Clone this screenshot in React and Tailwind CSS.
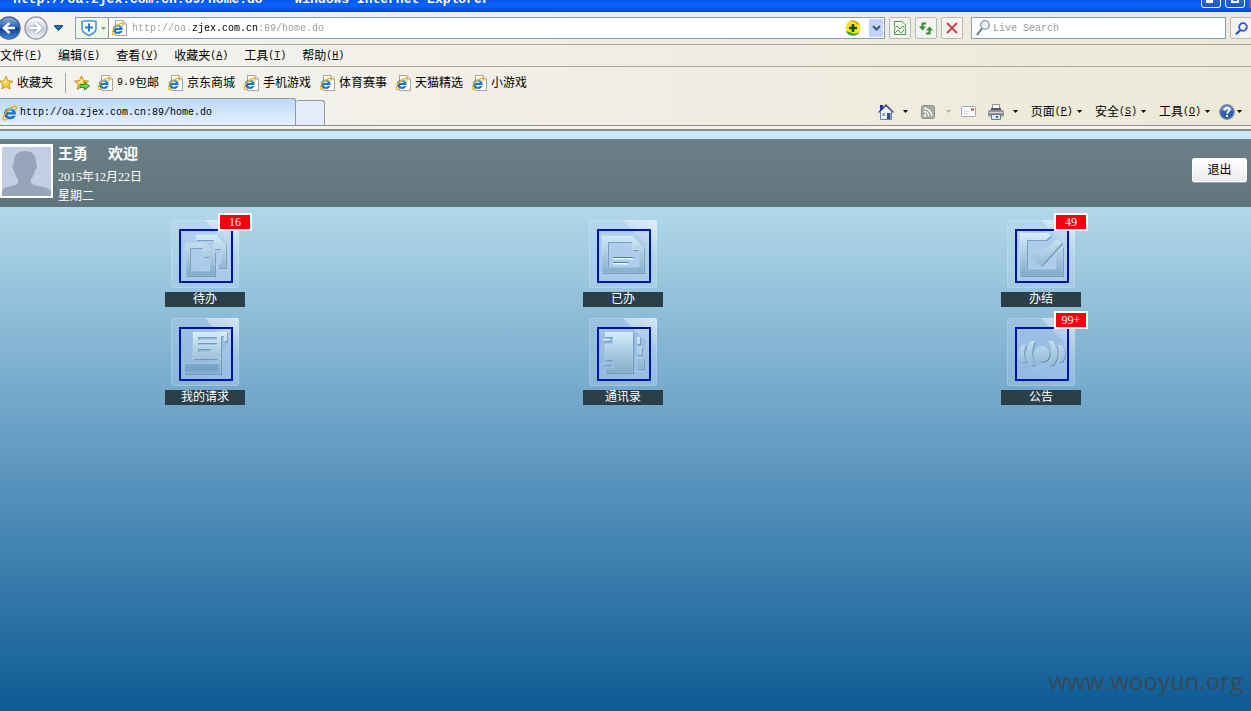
import React from "react";

const MONO = "font-['Liberation_Mono','Noto_Sans_CJK_SC',monospace] text-[10px]";

function Caret({ className = "text-black" }) {
  return (
    <svg className={`shrink-0 ${className}`} width="5" height="3" viewBox="0 0 5 3" aria-hidden="true">
      <path d="M0 0h5L2.5 3z" fill="currentColor" />
    </svg>
  );
}

function IeGlyph() {
  return (
    <g>
      <path
        d="M14 9.600H5.600c.2 1.500 1.200 2.200 2.500 2.200 1 0 1.700-.4 2.200-1.100h3.300c-.8 2.300-2.800 3.600-5.400 3.600C4.600 14.300 2 12 2 8.700S4.600 3 8 3c3.500 0 6 2.300 6 6.600zM5.700 7.200h4.800C10.200 6 9.300 5.500 8 5.500S6 6 5.700 7.200z"
        fill="#1a74c8"
      />
      <path d="M3 7C4 4.500 6 3.500 8 3.500c2 0 3.800.8 4.800 2.500C10 4.500 6 4.800 3 7z" fill="#62b5ee" />
      <path
        d="M13.300 5.200C15 2.600 14.900.900 13 1 9.800 1.300 3.800 6.200 1.800 10.700c-1.200 2.900-.700 4.600 1.200 4.200.900-.2 1.700-.6 2.600-1.300"
        fill="none"
        stroke="#efb21a"
        strokeWidth="1.500"
      />
    </g>
  );
}

function IeIcon() {
  return (
    <svg className="shrink-0" width="16" height="16" viewBox="0 0 16 16" aria-hidden="true">
      <IeGlyph />
    </svg>
  );
}

function IePage() {
  return (
    <svg className="shrink-0" width="15" height="16" viewBox="0 0 15 16" aria-hidden="true">
      <path d="M3.500.5h7.500l3.500 3.500v11.500h-11z" fill="#fff" stroke="#a9a48f" />
      <path d="M11 .5V4h3.500" fill="#e8e6da" stroke="#a9a48f" />
      <g transform="translate(-.8 2.200) scale(.82)">
        <IeGlyph />
      </g>
    </svg>
  );
}

function Star({ arrow }) {
  return (
    <svg className="shrink-0" width={arrow ? 16 : 15} height="16" viewBox="0 0 16 16" aria-hidden="true">
      <path
        d="M7.500 1l2 4.700 5 .4-3.800 3.300 1.200 5-4.400-2.700L3.100 14.400l1.200-5L.500 6.100l5-.4z"
        fill="#fbcf3e"
        stroke="#c98a10"
        strokeLinejoin="round"
      />
      <path d="M7.500 3l1 3.500-4 3 .8-3.200L3 6.600l3-.3z" fill="#fff0a8" />
      {arrow && <path d="M6 9.500h4.500V7L15.500 11l-5 4v-2.500H6z" fill="#6fd04c" stroke="#2b8c22" />}
    </svg>
  );
}

function ArrowCircle({ primary }) {
  return (
    <svg width="24" height="24" viewBox="0 0 24 24" aria-hidden="true">
      <defs>
        <linearGradient id={primary ? "backFill" : "fwdFill"} x1="0" y1="0" x2="0" y2="1">
          <stop offset="0" stopColor={primary ? "#8db2e2" : "#ffffff"} />
          <stop offset=".45" stopColor={primary ? "#2d62b4" : "#d8dde6"} />
          <stop offset=".55" stopColor={primary ? "#123f90" : "#c8cfdb"} />
          <stop offset="1" stopColor={primary ? "#3d8ee0" : "#f4f6fa"} />
        </linearGradient>
      </defs>
      <circle cx="12" cy="12" r="11" fill={primary ? "url(#backFill)" : "url(#fwdFill)"} stroke={primary ? "#4b6795" : "#98a1b2"} strokeWidth="1.500" />
      <path
        d={primary ? "M18 12H8m4.500-5L7 12l5.500 5" : "M6 12h10m-4.500-5l5.500 5-5.500 5"}
        fill="none"
        stroke={primary ? "#fff" : "#9aa3b3"}
        strokeWidth={primary ? "2.600" : "4.200"}
      />
      {!primary && <path d="M6 12h10m-4.500-5l5.500 5-5.500 5" fill="none" stroke="#fff" strokeWidth="2.400" />}
    </svg>
  );
}

function TitleBar() {
  const box =
    "flex h-5 w-5 shrink-0 items-end justify-center rounded-[3px] border border-white bg-gradient-to-b from-[#3b7ff0] to-[#1f52cf] pb-1";
  return (
    <header className="flex h-3 shrink-0 items-end justify-between overflow-hidden bg-gradient-to-b from-[#0a58e8] via-[#0464fb] to-[#0348c4]">
      <h1 className="flex gap-3 whitespace-nowrap pb-1 pl-[13px] font-['Liberation_Mono',monospace] text-[13px] leading-4 font-bold text-white">
        <span>http://oa.zjex.com.cn:89/home.do</span>
        <span>-</span>
        <span>Windows Internet Explorer</span>
      </h1>
      <div className="flex h-6 gap-1 pb-1">
        <button type="button" aria-label="最小化" className={box}>
          <span className="mr-1 h-[3px] w-[7px] bg-white" />
        </button>
        <button type="button" aria-label="最大化" className={box}>
          <span className="h-2 w-2 border-2 border-white" />
        </button>
        <div className="h-5 w-[2px] bg-[#d8452a]" />
      </div>
    </header>
  );
}

const TOOL = "flex h-[22px] w-[22px] shrink-0 items-center justify-center rounded-[2px] border border-[#b5b8c0] bg-[#f3f3ef]";

function AddressBar() {
  return (
    <div className="-mr-px flex h-8 shrink-0 items-center">
      <button type="button" aria-label="后退" className="-ml-[3px] shrink-0">
        <ArrowCircle primary />
      </button>
      <button type="button" aria-label="前进" className="ml-[3px] shrink-0">
        <ArrowCircle />
      </button>
      <button type="button" aria-label="历史记录" className="mx-[6px] shrink-0">
        <svg width="9" height="6" viewBox="0 0 9 6" aria-hidden="true">
          <path d="M.5.500h8v1L4.500 5.500.500 1.500z" fill="#1d6fa8" stroke="#154f86" />
        </svg>
      </button>
      <div className="ml-[6px] flex h-[22px] min-w-0 flex-1 items-center border border-[#7f9db9] bg-white">
        <div className="flex h-full w-[33px] shrink-0 items-center gap-[3px] border-r border-[#8b93a0] bg-[#eff8e2] pl-1">
          <svg width="18" height="18" viewBox="0 0 18 18" aria-hidden="true">
            <path d="M2 2.500q7-1.500 14 0v7q0 4-7 7-7-3-7-7z" fill="#fff" stroke="#4a93d6" strokeWidth="1.600" />
            <path d="M9 4.500v8M5 8.500h8" stroke="#2b77c8" strokeWidth="2" />
          </svg>
          <Caret className="text-[#8a9a80]" />
        </div>
        <span className="ml-[3px] mr-[5px]">
          <IePage />
        </span>
        <input
          aria-label="地址"
          defaultValue="http://oa.zjex.com.cn:89/home.do"
          className="min-w-0 flex-1 bg-[linear-gradient(90deg,#999_60px,#000_60px,#000_126px,#999_126px)] bg-clip-text pt-px font-['Liberation_Mono',monospace] text-[10px] text-transparent outline-none"
        />
        <svg className="mr-2 shrink-0" width="16" height="16" viewBox="0 0 16 16" aria-hidden="true">
          <circle cx="8" cy="8" r="7.500" fill="#f7e51c" />
          <path d="M1 11A7.500 7.500 0 0 0 14.500 12Q9 15 6 12.500z" fill="#3ba53a" />
          <path d="M15 5A7.500 7.500 0 0 0 4 1.500Q10 1 11.500 4z" fill="#d8a818" />
          <path d="M8 4v8M4 8h8" stroke="#1c4a14" strokeWidth="2.600" />
        </svg>
        <button type="button" aria-label="展开地址" className="mr-px flex h-[18px] w-[14px] shrink-0 items-center justify-center rounded-[1px] bg-[#c3d3fb]">
          <svg width="9" height="6" viewBox="0 0 9 6" aria-hidden="true">
            <path d="M1 1l3.500 3.500L8 1" fill="none" stroke="#3f587f" strokeWidth="2" />
          </svg>
        </button>
      </div>
      <div className="mx-1 flex shrink-0 gap-1">
        <button type="button" aria-label="兼容性视图" className={TOOL}>
          <svg width="12" height="14" viewBox="0 0 12 14" aria-hidden="true">
            <path d="M.5 6V.5h7.500l3.500 3.500v2M.5 8v5.500h11V8" fill="#f4fbf2" stroke="#4f9a55" />
            <path d="M0 8l3-3 3 3 3-3 3 3M1 12l3-3 3 3 3-3" fill="none" stroke="#4f9a55" />
          </svg>
        </button>
        <button type="button" aria-label="刷新" className={TOOL}>
          <svg width="14" height="13" viewBox="0 0 14 13" aria-hidden="true">
            <path d="M7 1.500H3.500V5M7 11.500h3.500V8" fill="none" stroke="#35893a" strokeWidth="2" />
            <path d="M0 4.500h7L3.500 8.500zM7 8.500h7l-3.500-4z" fill="#35893a" />
          </svg>
        </button>
        <button type="button" aria-label="停止" className={TOOL}>
          <svg width="12" height="12" viewBox="0 0 12 12" aria-hidden="true">
            <path d="M1 1l10 10M11 1L1 11" stroke="#c8414b" strokeWidth="2" />
          </svg>
        </button>
      </div>
      <div className="ml-1 flex h-[22px] w-[255px] shrink-0 items-center gap-[3px] border border-[#7f9db9] bg-white pl-1">
        <svg width="14" height="16" viewBox="0 0 14 16" aria-hidden="true">
          <circle cx="9" cy="5" r="4.300" fill="#eaf3fb" stroke="#8795a5" strokeWidth="1.300" />
          <path d="M6 8.500L1 15" stroke="#6b7684" strokeWidth="2" />
        </svg>
        <input
          aria-label="搜索"
          placeholder="Live Search"
          className="min-w-0 flex-1 pt-px font-['Liberation_Mono',monospace] text-[10px] outline-none placeholder:text-[#999]"
        />
      </div>
      <button type="button" aria-label="开始搜索" className={`${TOOL} ml-1`}>
        <svg width="13" height="13" viewBox="0 0 13 13" aria-hidden="true">
          <circle cx="8" cy="5" r="3.800" fill="#fff" stroke="#2456c8" strokeWidth="1.800" />
          <path d="M5.500 8L1 12.300" stroke="#2456c8" strokeWidth="2.200" />
        </svg>
      </button>
    </div>
  );
}

function MenuLabel({ text, letter }) {
  return (
    <span className="flex items-center whitespace-nowrap">
      {text}
      <span className={MONO}>
        (<span className="underline">{letter}</span>)
      </span>
    </span>
  );
}

const MENUS = [
  ["文件", "F"],
  ["编辑", "E"],
  ["查看", "V"],
  ["收藏夹", "A"],
  ["工具", "T"],
  ["帮助", "H"],
];

function MenuBar() {
  return (
    <nav className="flex h-[23px] shrink-0 items-center gap-4 border-t border-b border-[#aca899] pt-px">
      {MENUS.map(([text, letter]) => (
        <button type="button" key={letter}>
          <MenuLabel text={text} letter={letter} />
        </button>
      ))}
    </nav>
  );
}

const FAVOURITES = ["京东商城", "手机游戏", "体育赛事", "天猫精选", "小游戏"];

function FavouritesBar() {
  return (
    <nav className="flex h-[31px] shrink-0 items-center whitespace-nowrap pt-px">
      <button type="button" className="-ml-[1px] flex items-center gap-[3px]">
        <Star />
        收藏夹
      </button>
      <span className="ml-3 mr-2 h-5 w-px bg-[#aca899]" />
      <button type="button" aria-label="添加到收藏夹栏" className="mr-2">
        <Star arrow />
      </button>
      <div className="flex gap-[9px]">
        <a href="#bao" className="flex items-center gap-1">
          <IePage />
          <span className="flex items-center">
            <span className={MONO}>9.9</span>包邮
          </span>
        </a>
        {FAVOURITES.map((name) => (
          <a href="#fav" key={name} className="flex items-center gap-1">
            <IePage />
            {name}
          </a>
        ))}
      </div>
    </nav>
  );
}

function TabRow() {
  return (
    <div className="flex h-7 shrink-0 items-end justify-between border-b border-[#8e8f8f]">
      <div className="flex items-end">
        <button
          type="button"
          className="flex h-[27px] w-[296px] items-center gap-[2px] rounded-tr-[3px] border-t border-r border-[#919b9c] bg-gradient-to-b from-[#bcd8f8] to-[#e6f1fd] pt-px pl-[2px]"
        >
          <IeIcon />
          <span className={MONO}>http://oa.zjex.com.cn:89/home.do</span>
        </button>
        <button type="button" aria-label="新选项卡" className="h-[25px] w-[29px] rounded-t-[3px] border border-b-0 border-l-0 border-[#919b9c] bg-[#e3edfa]" />
      </div>
      <div className="flex h-full items-center pr-[9px]">
        <button type="button" aria-label="主页" className="flex items-center gap-[9px]">
          <svg width="16" height="16" viewBox="0 0 16 16" aria-hidden="true">
            <path d="M2.500 7.500v8h11v-8L8 2z" fill="#eef2fa" stroke="#6f80a8" />
            <path d="M.5 8.500L8 1l7.500 7.500" fill="none" stroke="#44598f" strokeWidth="1.500" />
            <path d="M2 1h3v3L2 7z" fill="#24378c" />
            <path d="M9 9h3.500v6H9z" fill="#2e4da5" />
            <path d="M4.500 9H7v3H4.500z" fill="#7ba0d8" />
          </svg>
          <Caret />
        </button>
        <button type="button" aria-label="源" className="ml-[13px] flex items-center gap-[11px]">
          <svg width="14" height="14" viewBox="0 0 14 14" aria-hidden="true">
            <rect x=".5" y=".5" width="13" height="13" rx="2" fill="#a9a9a6" stroke="#8e8e8a" />
            <circle cx="4" cy="10.500" r="1.300" fill="#fff" />
            <path d="M2.800 6.500a4.700 4.700 0 0 1 4.900 4.900M2.800 3.300a8 8 0 0 1 8 8" fill="none" stroke="#fff" strokeWidth="1.400" />
          </svg>
          <Caret className="text-[#b9b6a8]" />
        </button>
        <button type="button" aria-label="阅读邮件" className="ml-[10px]">
          <svg width="15" height="11" viewBox="0 0 15 11" aria-hidden="true">
            <rect x=".5" y=".5" width="14" height="10" rx="1" fill="#f9f9fb" stroke="#a3a5b5" />
            <path d="M3 5.500h5M3 7.500h4" stroke="#d5d6de" />
            <path d="M10 2.500h3v2h-3z" fill="#c8434c" />
          </svg>
        </button>
        <button type="button" aria-label="打印" className="ml-[12px] flex items-center gap-[9px]">
          <svg width="16" height="16" viewBox="0 0 16 16" aria-hidden="true">
            <path d="M4.500 5V.5h7V5" fill="#fff" stroke="#8f8f8f" />
            <path d="M3 4h10v3H3z" fill="#55575c" />
            <path d="M2 6h12q2 0 2 2v3.500q0 1-1 1H1q-1 0-1-1V8q0-2 2-2z" fill="#8f9196" />
            <path d="M1 8.500h14" stroke="#d4d5d8" />
            <path d="M3.500 10.500h9v5h-9z" fill="#dce8f5" stroke="#6f7782" />
            <path d="M8 12h2v2H8z" fill="#3a63b0" />
          </svg>
          <Caret />
        </button>
        {[
          ["页面", "P"],
          ["安全", "S"],
          ["工具", "O"],
        ].map(([text, letter]) => (
          <button type="button" key={letter} className="ml-[13px] flex items-center gap-1">
            <MenuLabel text={text} letter={letter} />
            <Caret />
          </button>
        ))}
        <button type="button" aria-label="帮助" className="ml-[9px] flex items-center gap-[2px]">
          <svg width="16" height="16" viewBox="0 0 16 16" aria-hidden="true">
            <circle cx="8" cy="8" r="7.300" fill="#2f5eae" stroke="#8b97ab" strokeWidth="1.300" />
            <path d="M2.500 6a5.800 5.800 0 0 1 11 0q-5.500 2.500-11 0z" fill="#7da3dd" />
            <path d="M5.500 6.200C5.700 3 10.500 3 10.500 6c0 1.800-2.400 1.800-2.400 3.800M8.100 11v2" fill="none" stroke="#fff" strokeWidth="1.800" />
          </svg>
          <Caret />
        </button>
      </div>
    </div>
  );
}

function UserBar() {
  return (
    <section className="flex h-[68px] shrink-0 items-center justify-between bg-gradient-to-b from-[#6d8087] to-[#60747d] pr-1 text-white">
      <div className="flex items-center gap-[5px]">
        <svg className="-mt-1 box-content border-[2px] border-t-[3px] border-white" width="49" height="49" viewBox="0 0 49 49" role="img" aria-label="头像">
          <path d="M0 0h49v49H0z" fill="#c3cee2" />
          <path
            d="M0 49v-5c1-4 7-4 13-6 3-1 4-3 3-6-3-3-3-6-4-9-2-1-2-5 0-6C11 8 16 4 23 4s12 4 11 13c2 1 1 5-1 6-1 3-1 6-4 9-1 3 0 5 3 6 6 2 15 2 17 6v5z"
            fill="#98a3bc"
          />
        </svg>
        <div>
          <p className="flex gap-5 text-[15px] leading-[26px] font-bold">
            <span>王勇</span>
            <span>欢迎</span>
          </p>
          <p className="font-['Liberation_Serif','Noto_Sans_CJK_SC',serif] leading-5">2015年12月22日</p>
          <p className="leading-[18px]">星期二</p>
        </div>
      </div>
      <button
        type="button"
        className="mt-[-6px] h-6 w-[55px] rounded-[2px] border border-white bg-gradient-to-b from-white to-[#ececec] text-black shadow-[0_1px_0_#9aa5aa]"
      >
        退出
      </button>
    </section>
  );
}

const ICONS = {
  pending: (
    <>
      <path d="M17 6h21l9 10v23h-8v-4h3V20h-7v-9H17z" />
      <path d="M7 14h20l9 9v24H7zM11 19v23h20V28h-7v-9z" fillRule="evenodd" />
      <path d="M25 19l6 7h-6z" />
    </>
  ),
  done: (
    <>
      <path d="M5 7h31l11 12v25H5zM11 13v25h31V21h-7v-8z" fillRule="evenodd" />
      <path d="M16 29h20v1H16zM16 34h15v1H16z" fill="#f0fbff" stroke="none" />
      <path d="M16 28h20v1H16zM16 33h15v1H16z" fill="#4f819f" stroke="none" />
    </>
  ),
  closed: (
    <>
      <path d="M5 4h29l2 3-5 4H12v29h29V24l7-7v30H5z" />
      <path d="M15 27l5-5 5 5 17-17 5 4-21 23z" />
    </>
  ),
  requests: (
    <>
      <path d="M14 5h34v9h-3V9h-3v23H14zM19 10v3h19v-3zm0 6v2h19v-2zm0 6v3h13v-3z" fillRule="evenodd" />
      <path d="M39 32h3v15H5V37h34z" />
      <path d="M6 37h33v7H6z" fill="#5f93bb" fillOpacity=".5" stroke="none" />
    </>
  ),
  contacts: (
    <>
      <path d="M8 5h28v41H8v-5h8v-8H8V17h8V10H8z" />
      <path d="M6 12h7v2H6zM6 36h7v2H6zM40 10h3v7h-3zM40 20h5v8h-5zM40 31h7v11h-7z" />
    </>
  ),
  notices: (
    <>
      <circle cx="27" cy="27" r="7.500" />
      <path d="M16 14h4q-6 12 0 24h-4q-9-12 0-24zM38 14h-4q6 12 0 24h4q9-12 0-24zM7 18h4q-4 8 0 17H7q-6-9 0-17zM47 18h-4q4 8 0 17h4q6-9 0-17z" />
    </>
  ),
};

const APPS = [
  { icon: "pending", label: "待办", badge: "16" },
  { icon: "done", label: "已办" },
  { icon: "closed", label: "办结", badge: "49" },
  { icon: "requests", label: "我的请求" },
  { icon: "contacts", label: "通讯录" },
  { icon: "notices", label: "公告", badge: "99+" },
];

function AppTile({ icon, label, badge }) {
  return (
    <a href={`#${icon}`} className="relative flex w-20 flex-col items-center gap-1">
      <span className="relative block h-[68px] w-[68px] pt-[9px] pl-2">
        <svg className="absolute inset-0" width="68" height="68" viewBox="0 0 68 68" aria-hidden="true">
          <defs>
            <linearGradient id={`shine-${icon}`} x1="1" y1="0" x2=".6" y2="1">
              <stop offset="0" stopColor="#fff" stopOpacity=".6" />
              <stop offset=".5" stopColor="#d5e2ff" stopOpacity=".22" />
              <stop offset="1" stopColor="#bcd0ff" stopOpacity=".1" />
            </linearGradient>
          </defs>
          <rect x=".5" y=".5" width="67" height="67" rx="2" fill="#d5e6ff" fillOpacity=".2" stroke="#e2f2ff" strokeOpacity=".3" />
          <path d="M34 0h32q2 0 2 2v64q0 2-2 2H30L10 52q30 0 48-28Q46 14 34 0z" fill={`url(#shine-${icon})`} />
        </svg>
        <span className="relative block h-[54px] w-[54px] border-2 border-[#0015a8] bg-[#a9bfff]/20">
          <svg className="block" width="50" height="50" viewBox="2 2 50 50" aria-hidden="true">
            <defs>
              <linearGradient id={`fill-${icon}`} x1="0" y1="4" x2="0" y2="48" gradientUnits="userSpaceOnUse">
                <stop offset="0" stopColor="#d8edf8" />
                <stop offset=".5" stopColor="#a9cbe0" />
                <stop offset="1" stopColor="#7ea9c7" />
              </linearGradient>
            </defs>
            <g fill="#2f607f" fillOpacity=".5" stroke="none" transform="translate(1 1)">
              {ICONS[icon]}
            </g>
            <g fill={`url(#fill-${icon})`} stroke="#e6f5fc" strokeOpacity=".35" strokeWidth=".6">
              {ICONS[icon]}
            </g>
          </svg>
        </span>
      </span>
      <span className="w-full bg-[#2b3f4b] text-center leading-[15px] text-white">{label}</span>
      {badge && (
        <span className="absolute -top-[7px] left-[53px] h-[18px] w-[34px] border-2 border-white bg-[#f5000c] text-center font-['Liberation_Serif',serif] text-xs leading-[15px] text-white">
          {badge}
        </span>
      )}
    </a>
  );
}

export default function App() {
  return (
    <div className="flex min-h-screen flex-col overflow-hidden bg-gradient-to-r from-[#f4f3f0] to-[#ece9d8] font-['Liberation_Sans','Noto_Sans_CJK_SC',sans-serif] text-xs text-black">
      <TitleBar />
      <AddressBar />
      <MenuBar />
      <FavouritesBar />
      <TabRow />
      <div className="h-[5px] shrink-0 border-b-2 border-[#8a8a86] bg-[#f4f3ee]" />
      <main className="relative flex flex-1 flex-col bg-[linear-gradient(180deg,#cbe8f7_0px,#b1d7e9_78px,#70a5c9_48%,#0d5b94_100%)] pt-2">
        <UserBar />
        <section className="mr-px -ml-1 grid grid-cols-3 justify-items-center gap-y-[11px] pt-[13px]">
          {APPS.map((app) => (
            <AppTile key={app.icon} {...app} />
          ))}
        </section>
        <p className="absolute right-2 bottom-[14px] font-['Open_Sans',sans-serif] text-2xl leading-8 text-[#36495a]">www.wooyun.org</p>
      </main>
    </div>
  );
}
